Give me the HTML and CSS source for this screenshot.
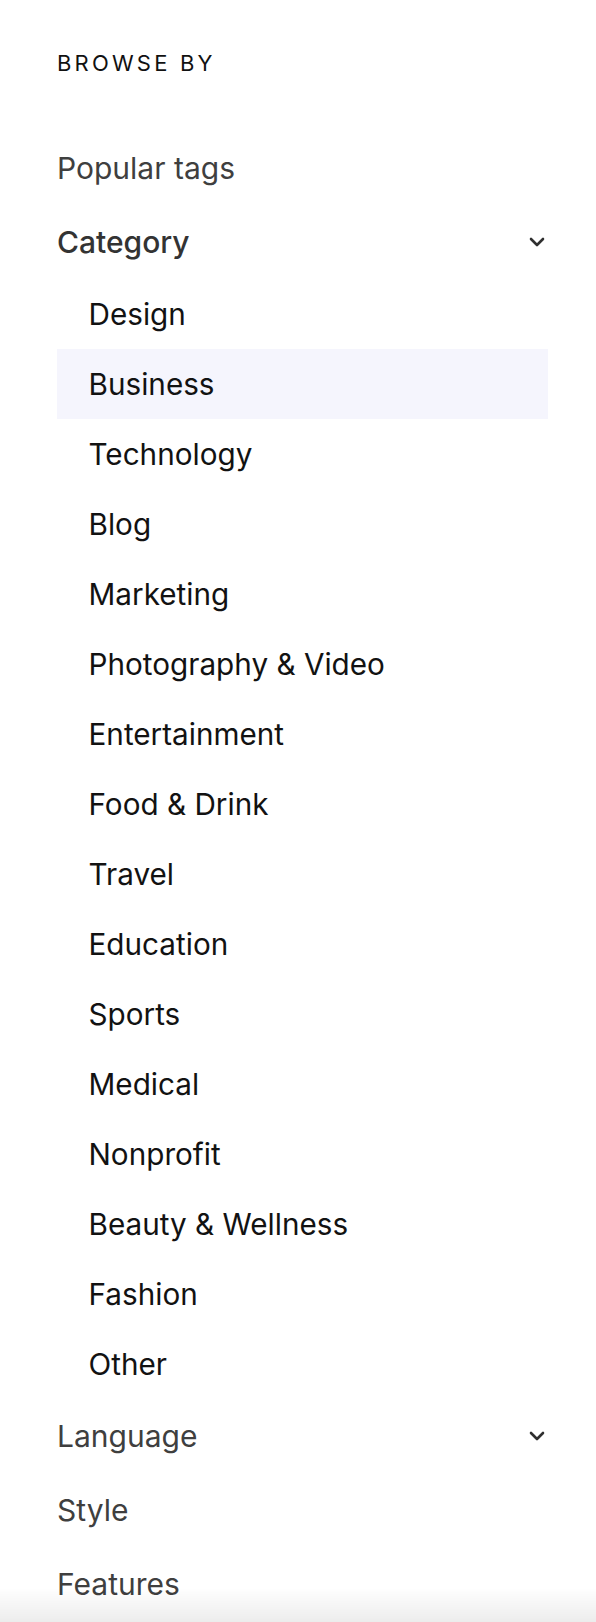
FILE: index.html
```html
<!DOCTYPE html>
<html lang="en">
<head>
<meta charset="utf-8">
<title>Browse by</title>
<link rel="stylesheet" href="styles.css">
</head>
<body>
<nav class="browse">
  <h2 class="browse-title">BROWSE BY</h2>
  <ul class="menu">
    <li class="menu-item"><span class="menu-label">Popular tags</span></li>
    <li class="menu-item menu-item--open">
      <span class="menu-label">Category</span>
      <svg class="chevron" viewBox="0 0 16 10" width="16" height="10" aria-hidden="true"><path d="M2 2 L8 8 L14 2"/></svg>
    </li>
    <li>
      <ul class="submenu">
        <li class="sub-item">Design</li>
        <li class="sub-item sub-item--active">Business</li>
        <li class="sub-item">Technology</li>
        <li class="sub-item">Blog</li>
        <li class="sub-item">Marketing</li>
        <li class="sub-item">Photography &amp; Video</li>
        <li class="sub-item">Entertainment</li>
        <li class="sub-item">Food &amp; Drink</li>
        <li class="sub-item">Travel</li>
        <li class="sub-item">Education</li>
        <li class="sub-item">Sports</li>
        <li class="sub-item">Medical</li>
        <li class="sub-item">Nonprofit</li>
        <li class="sub-item">Beauty &amp; Wellness</li>
        <li class="sub-item">Fashion</li>
        <li class="sub-item">Other</li>
      </ul>
    </li>
    <li class="menu-item">
      <span class="menu-label">Language</span>
      <svg class="chevron" viewBox="0 0 16 10" width="16" height="10" aria-hidden="true"><path d="M2 2 L8 8 L14 2"/></svg>
    </li>
    <li class="menu-item"><span class="menu-label">Style</span></li>
    <li class="menu-item"><span class="menu-label">Features</span></li>
  </ul>
</nav>
<div class="bottom-fade"></div>
</body>
</html>
```

FILE: styles.css
```css
html, body {
  margin: 0;
  padding: 0;
  background: #ffffff;
}

body {
  font-family: Inter, "Noto Sans", "Liberation Sans", sans-serif;
  color: #111111;
  height: 1622px;
  overflow: hidden;
}

.browse {
  width: 491px;
  margin-left: 57px;
  padding-top: 49px;
}

.browse-title {
  margin: 0 0 54px 0;
  font-size: 22px;
  line-height: 28px;
  font-weight: 400;
  letter-spacing: 3.2px;
  color: #111111;
}

.menu,
.submenu {
  list-style: none;
  margin: 0;
  padding: 0;
}

.menu-item {
  display: flex;
  align-items: center;
  justify-content: space-between;
  height: 74px;
  font-size: 30px;
  color: #3f3f3f;
}

.menu-item--open {
  font-weight: 500;
  color: #333333;
}

.menu-label {
  line-height: 36px;
}

.chevron {
  display: block;
  margin-right: 3px;
  fill: none;
  stroke: #2f2f2f;
  stroke-width: 2.6;
  stroke-linecap: round;
  stroke-linejoin: round;
}

.sub-item {
  display: flex;
  align-items: center;
  height: 70px;
  padding-left: 31.5px;
  font-size: 29.7px;
  color: #121212;
}

.sub-item--active {
  background: #f5f5fd;
}

.bottom-fade {
  position: fixed;
  left: 0;
  right: 0;
  bottom: 0;
  height: 34px;
  background: linear-gradient(to bottom, rgba(0, 0, 0, 0), rgba(0, 0, 0, 0.075));
  pointer-events: none;
}
```
